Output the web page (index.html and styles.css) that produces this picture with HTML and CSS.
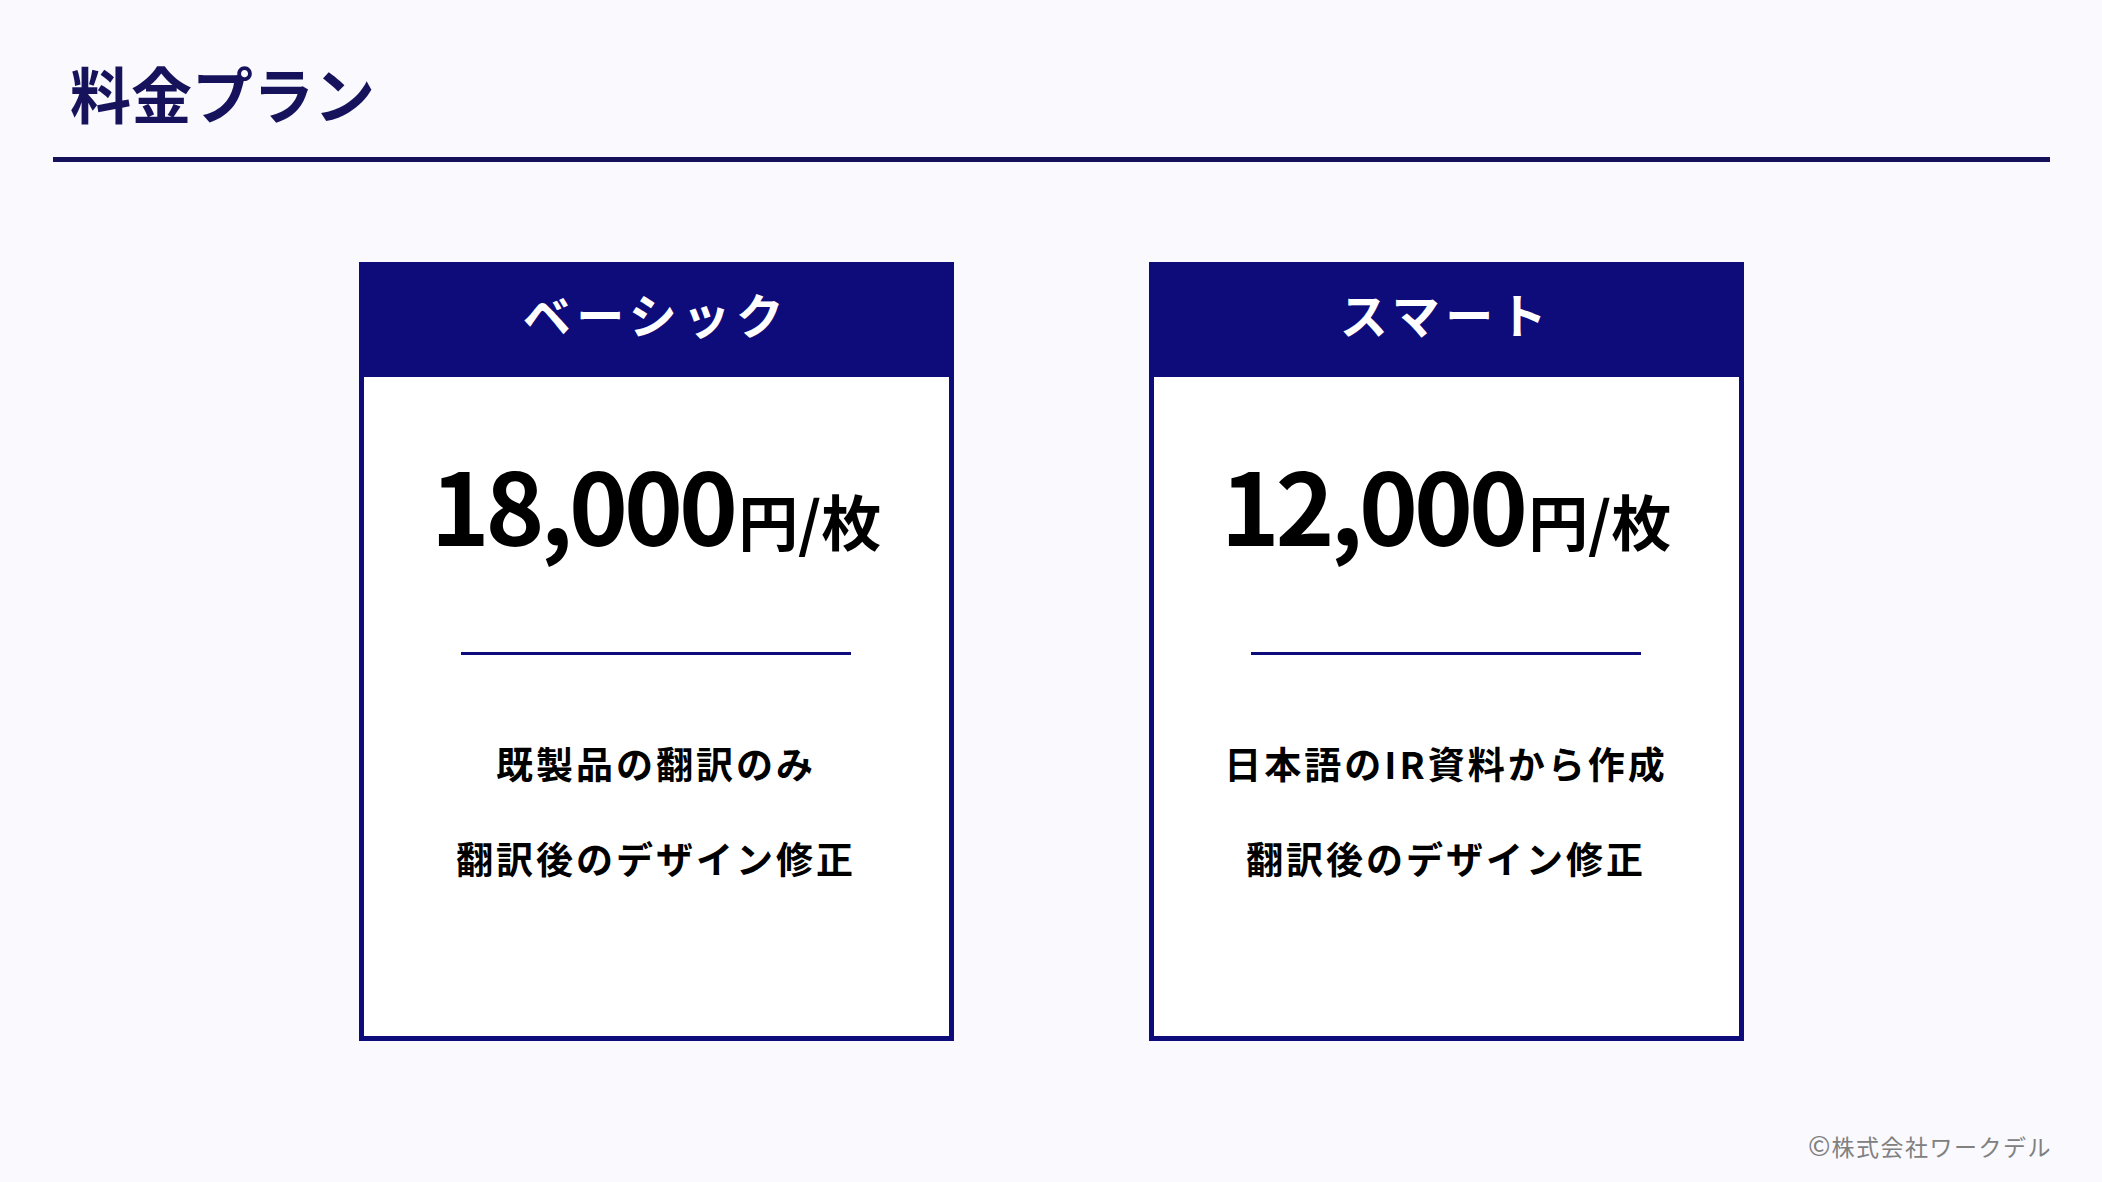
FILE: index.html
```html
<!DOCTYPE html>
<html lang="ja">
<head>
<meta charset="utf-8">
<title>料金プラン</title>
<link rel="stylesheet" href="styles.css">
</head>
<body>
<div class="page">
  <header class="page-head">
    <h1 class="page-title">料金プラン</h1>
    <div class="page-rule"></div>
  </header>
  <main class="plans">
    <section class="plan">
      <div class="plan-head">ベーシック</div>
      <div class="plan-body">
        <div class="price">18,000<span class="unit">円/枚</span></div>
        <div class="divider"></div>
        <ul class="features">
          <li>既製品の翻訳のみ</li>
          <li>翻訳後のデザイン修正</li>
        </ul>
      </div>
    </section>
    <section class="plan">
      <div class="plan-head">スマート</div>
      <div class="plan-body">
        <div class="price">12,000<span class="unit">円/枚</span></div>
        <div class="divider"></div>
        <ul class="features">
          <li>日本語のIR資料から作成</li>
          <li>翻訳後のデザイン修正</li>
        </ul>
      </div>
    </section>
  </main>
  <footer class="copy"><span class="copy-mark">©</span>株式会社ワークデル</footer>
</div>
</body>
</html>
```

FILE: styles.css
```css
html, body {
  margin: 0;
  padding: 0;
}
body {
  background: #f9f9fe;
  font-family: "Noto Sans CJK JP", "Noto Sans", sans-serif;
  color: #000;
}
.page {
  width: 2102px;
  height: 1182px;
  display: flex;
  flex-direction: column;
  box-sizing: border-box;
}
.page-head {
  padding: 62px 52px 0 53px;
}
.page-title {
  margin: 0 0 34px 17px;
  font-size: 61px;
  line-height: 1;
  font-weight: 700;
  color: #16135c;
}
.page-rule {
  height: 5px;
  background: #15115a;
}
.plans {
  display: flex;
  justify-content: center;
  gap: 195px;
  margin-top: 100px;
}
.plan {
  width: 595px;
  height: 779px;
  box-sizing: border-box;
  border: 5px solid #0e0b7b;
  background: #fff;
  display: flex;
  flex-direction: column;
}
.plan-head {
  height: 110px;
  box-sizing: border-box;
  background: #0e0b7b;
  color: #fff;
  font-size: 48px;
  font-weight: 700;
  line-height: 1;
  letter-spacing: 5.5px;
  text-align: center;
  padding-top: 22px;
}
.plan-body {
  display: flex;
  flex-direction: column;
  align-items: center;
  padding-top: 76px;
}
.price {
  font-size: 100px;
  font-weight: 700;
  line-height: 1;
  letter-spacing: -4px;
  white-space: nowrap;
}
.unit {
  font-size: 60px;
  letter-spacing: 0;
  margin-left: 4px;
}
.divider {
  width: 390px;
  height: 3px;
  background: #0e0b7b;
  margin-top: 99px;
}
.features {
  list-style: none;
  margin: 90px 0 0;
  padding: 0;
  display: flex;
  flex-direction: column;
  align-items: center;
  gap: 58px;
}
.features li {
  font-size: 37px;
  font-weight: 700;
  line-height: 1;
  letter-spacing: 3px;
}
.copy {
  margin-top: 90px;
  align-self: flex-end;
  padding-right: 50px;
  font-size: 23px;
  line-height: 1;
  color: #808080;
  letter-spacing: 1.5px;
}
.copy-mark {
  font-size: 27px;
  letter-spacing: 0;
  margin-right: 1px;
}
```
